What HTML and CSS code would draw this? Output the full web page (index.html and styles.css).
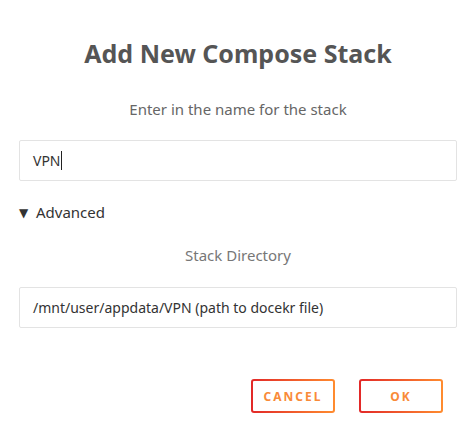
FILE: index.html
```html
<!DOCTYPE html>
<html lang="en">
<head>
  <meta charset="UTF-8">
  <meta name="viewport" content="width=device-width, initial-scale=1.0">
  <title>Add New Compose Stack</title>
  <link rel="stylesheet" href="styles.css">
</head>
<body>
  <div class="dialog">
    <h2 class="dialog-title">Add New Compose Stack</h2>
    <p class="dialog-text">Enter in the name for the stack</p>
    <div class="field">
      <span class="field-value">VPN</span><span class="caret"></span>
    </div>

    <!-- Advanced options -->
    <div class="advanced">
      <div class="advanced-toggle"><span class="arrow">&#9660;</span>Advanced</div>
      <p class="dialog-text muted">Stack Directory</p>
      <div class="field">
        <span class="field-value">/mnt/user/appdata/VPN (path to docekr file)</span>
      </div>
    </div>

    <div class="actions">
      <button class="btn">Cancel</button>
      <button class="btn">OK</button>
    </div>
  </div>
</body>
</html>
```

FILE: styles.css
```css
/* General styling */
body {
  margin: 0;
  background-color: #fff;
  font-family: "Noto Sans", "Open Sans", sans-serif;
  color: #555;
}
.dialog {
  padding: 38px 9px 0 19px;
}
.dialog-title {
  margin: 0;
  text-align: center;
  font-size: 25px;
  font-weight: bold;
  line-height: 30px;
  color: #555;
}
.dialog-text {
  margin: 31px 0 0;
  text-align: center;
  font-size: 15px;
  line-height: 20px;
  color: #666;
}
/* Input fields */
.field {
  display: flex;
  align-items: center;
  height: 39px;
  margin-top: 21px;
  padding: 0 13px;
  border: 1px solid #e3e3e3;
  border-radius: 2px;
  font-size: 14px;
  color: #333;
}
.caret {
  display: inline-block;
  width: 1px;
  height: 19px;
  background-color: #222;
}
/* Advanced section */
.advanced-toggle {
  margin-top: 21px;
  font-size: 15px;
  line-height: 20px;
  color: #333;
}
.arrow {
  display: inline-block;
  width: 17px;
  font-family: "DejaVu Sans", sans-serif;
  font-size: 12px;
  vertical-align: 1px;
}
.advanced .dialog-text {
  margin-top: 22px;
}
.advanced .field {
  margin-top: 22px;
}
.muted {
  color: #777;
}
/* Buttons */
.actions {
  display: flex;
  justify-content: flex-end;
  gap: 24px;
  margin-top: 51px;
  padding-right: 14px;
}
.btn {
  width: 84px;
  height: 34px;
  border: 2px solid transparent;
  border-radius: 3px;
  background: linear-gradient(#fff, #fff) padding-box,
    linear-gradient(90deg, #e22828, #ff8c2f) border-box;
  font-family: "Noto Sans", sans-serif;
  font-size: 12px;
  font-weight: bold;
  letter-spacing: 2px;
  text-transform: uppercase;
  color: #f98a38;
  cursor: pointer;
}
```
